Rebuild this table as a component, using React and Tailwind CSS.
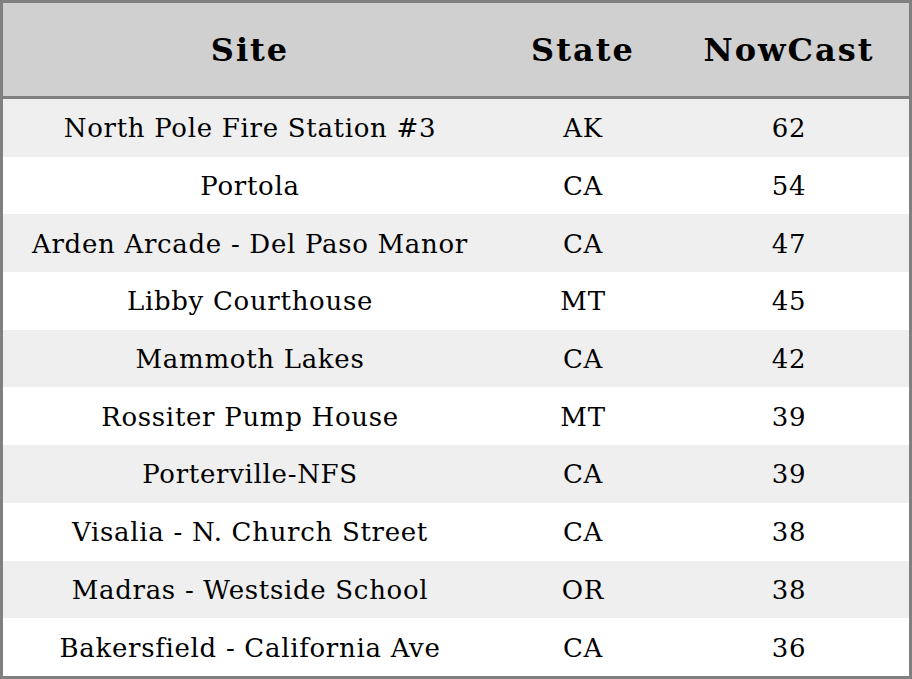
const rows = [
	["North Pole Fire Station #3", "AK", 62],
	["Portola", "CA", 54],
	["Arden Arcade - Del Paso Manor", "CA", 47],
	["Libby Courthouse", "MT", 45],
	["Mammoth Lakes", "CA", 42],
	["Rossiter Pump House", "MT", 39],
	["Porterville-NFS", "CA", 39],
	["Visalia - N. Church Street", "CA", 38],
	["Madras - Westside School", "OR", 38],
	["Bakersfield - California Ave", "CA", 36],
]

const App = () => {
	return (
		<div
			className="w-[912px] h-[679px] border-[3px] border-[#808080] bg-white text-black"
			style={{ fontFamily: '"DejaVu Serif", serif' }}
		>
			<div className="grid grid-cols-[494px_172px_240px] h-[96px] bg-[#d0d0d0] border-b-[3px] border-[#808080] text-[32px] tracking-[2px] font-bold items-center text-center">
				<div>Site</div>
				<div>State</div>
				<div>NowCast</div>
			</div>
			{rows.map((row, index) => (
				<div
					key={index}
					className={
						"grid grid-cols-[494px_172px_240px] h-[57.7px] pt-[2px] items-center text-center text-[26px] tracking-[0.7px] " +
						(index % 2 === 0 ? "bg-[#efefef]" : "bg-white")
					}
				>
					<div>{row[0]}</div>
					<div>{row[1]}</div>
					<div>{row[2]}</div>
				</div>
			))}
		</div>
	)
}

export default App
